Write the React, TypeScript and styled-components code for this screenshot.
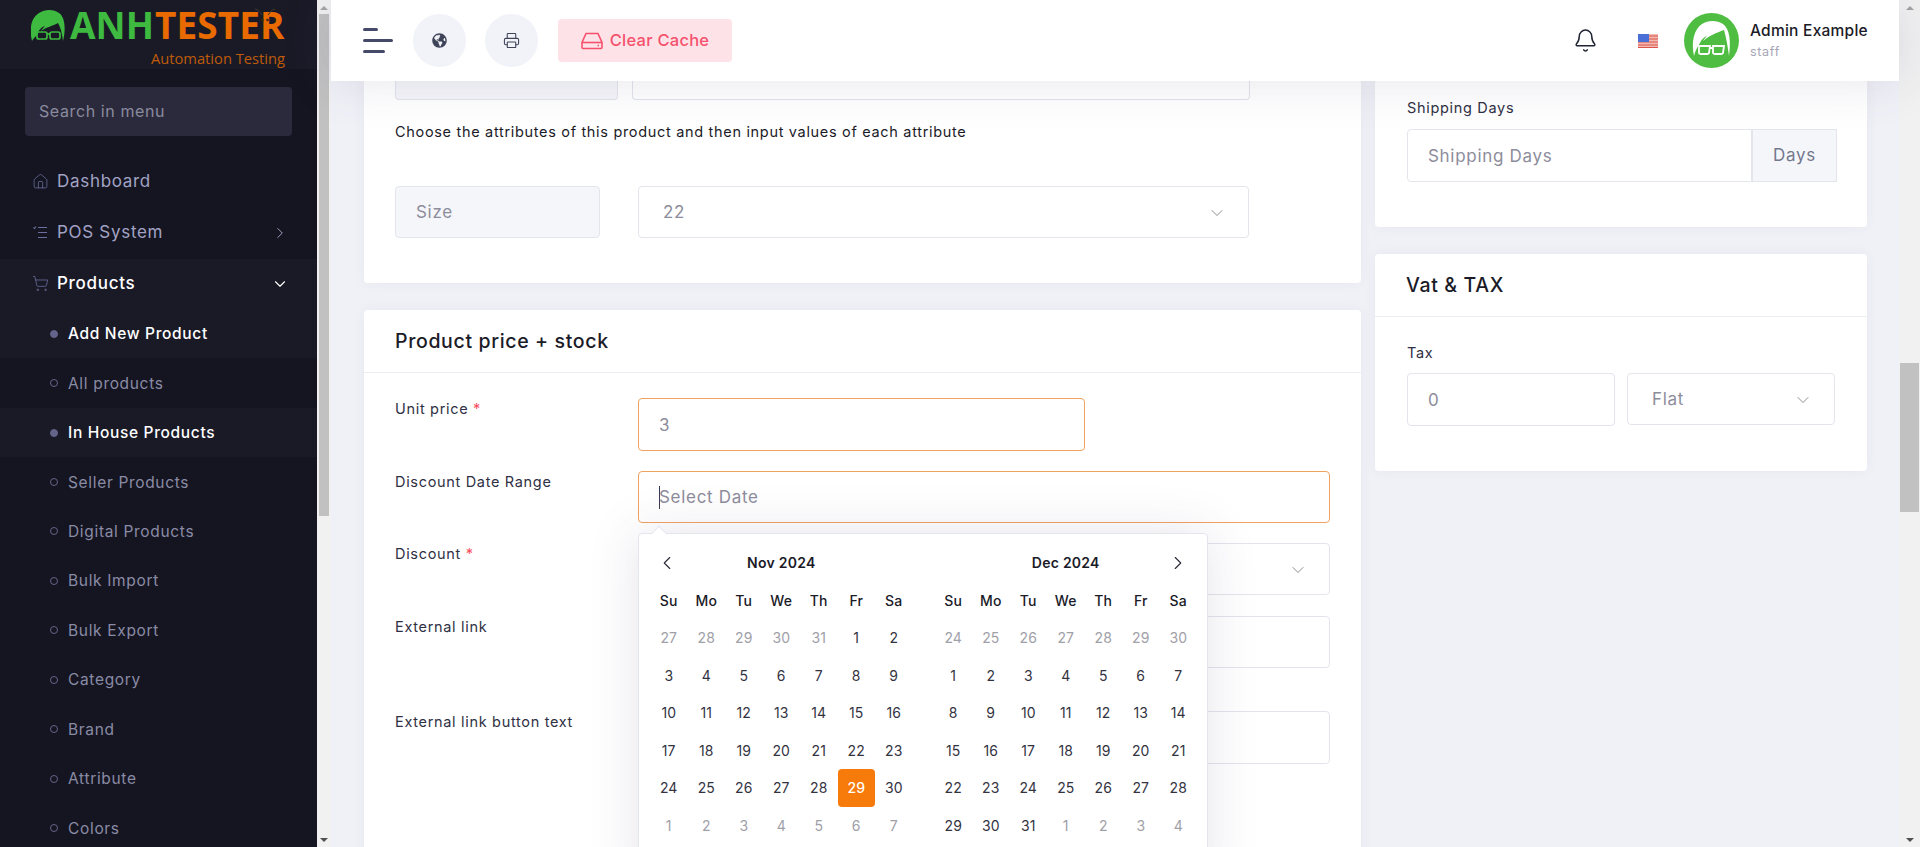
import React from "react";
import styled, { createGlobalStyle } from "styled-components";
import { ChevronDown, ChevronLeft, ChevronRight, Printer, Bell, Home, ShoppingCart } from "lucide-react";
import { FaGlobeAmericas } from "react-icons/fa";

const Global = createGlobalStyle`
  html, body { margin: 0; padding: 0; height: 100%; overflow: hidden; background: #f0f1f7; }
  * { box-sizing: border-box; }
  body { font-family: Inter, "Open Sans", "Liberation Sans", sans-serif; font-size: 14.5px; line-height: 21px; color: #1b1b28; letter-spacing: .68px; }
`;

const Shell = styled.div`display: flex; width: 1920px; height: 847px; overflow: hidden;`;
const Sidebar = styled.aside`width: 317px; flex: none; background: #151521; display: flex; flex-direction: column; overflow: hidden;`;
const Brand = styled.div`height: 69px; flex: none; background: #1a1a27; padding: 6px 0 0 31px; display: flex; flex-direction: column;`;
const BrandTop = styled.div`display: flex; align-items: flex-start; position: relative; height: 38px; font-family: "Open Sans", sans-serif; font-weight: 700; font-size: 37px; line-height: 38px; letter-spacing: .05px;`;
const BrandHead = styled.svg`width: 34px; height: 34px; margin: 3px 5px 0 0; flex: none;`;
const Anh = styled.span`color: #3dba3f;`;
const Tester = styled.span`color: #e86a00; margin-left: 1px;`;
const Bug = styled.svg`position: absolute; left: 222px; top: 1px; width: 24px; height: 24px;`;
const Tagline = styled.div`margin: 4px 0 0 120px; font-family: "Open Sans", sans-serif; font-size: 14.7px; line-height: 20px; color: #bf5a0a; letter-spacing: 0;`;
const SearchBox = styled.div`margin: 18px 25px 19.5px; height: 49px; flex: none; background: #2a2a3c; border-radius: 4px; padding: 0 14px; display: flex; align-items: center; font-size: 16px; color: #8b8b9e; letter-spacing: .6px;`;
const MenuRow = styled.div<{ $active?: boolean; $h?: number }>`height: ${p => p.$h ?? 51.5}px; flex: none; display: flex; align-items: center; padding: 0 28px 0 32px; gap: 8px; font-size: 17px; letter-spacing: .7px; background: ${p => p.$active ? "#1a1a27" : "transparent"}; color: ${p => p.$active ? "#fff" : "#a2a3c4"}; font-weight: ${p => p.$active ? 500 : 400};`;
const MenuLabel = styled.span`flex: 1;`;
const MenuIcon = styled.span`width: 17px; height: 17px; display: flex; color: #6b6f9e; flex: none;`;
const SubRow = styled.div<{ $active?: boolean }>`height: 49.45px; flex: none; display: flex; align-items: center; padding-left: 50px; gap: 10px; font-size: 15.5px; letter-spacing: .67px; background: ${p => p.$active ? "#1a1a27" : "#151521"}; color: ${p => p.$active ? "#fff" : "#8a8ba5"}; font-weight: ${p => p.$active ? 500 : 400};`;
const Bullet = styled.span<{ $active?: boolean }>`width: 8px; height: 8px; border-radius: 50%; flex: none; border: 1px solid #64648a; background: ${p => p.$active ? "#64648a" : "transparent"};`;

const Track = styled.div<{ $w: number }>`width: ${p => p.$w}px; flex: none; background: #f1f1f1; display: flex; flex-direction: column; align-items: center; position: relative;`;
const ArrowUp = styled.span`margin-top: 6px; width: 0; height: 0; border-left: 4px solid transparent; border-right: 4px solid transparent; border-bottom: 4px solid #a3a3a3; flex: none;`;
const ArrowDown = styled.span`margin-top: auto; margin-bottom: 5px; width: 0; height: 0; border-left: 4px solid transparent; border-right: 4px solid transparent; border-top: 4px solid #505050; flex: none;`;
const Thumb = styled.div<{ $top: number; $h: number; $w: number }>`margin-top: ${p => p.$top}px; height: ${p => p.$h}px; width: ${p => p.$w}px; background: #c1c1c1; flex: none;`;

const Main = styled.main`flex: 1; min-width: 0; display: flex; flex-direction: column; height: 847px; background: #f0f1f7;`;
const Topbar = styled.header`height: 81px; flex: none; background: #fff; display: flex; align-items: center; padding: 0 0 0 32px; position: relative; z-index: 5; box-shadow: 0 0 50px 0 rgba(82,63,105,.15);`;
const Burger = styled.div`width: 30px; display: flex; flex-direction: column; gap: 8px; margin-right: 20px;`;
const BurgerLine = styled.span<{ $w: number }>`height: 3px; width: ${p => p.$w}px; background: #454a68; border-radius: 2px;`;
const RoundBtn = styled.div<{ $mr: number }>`width: 53px; height: 53px; border-radius: 50%; background: #f2f3f8; display: flex; align-items: center; justify-content: center; margin-right: ${p => p.$mr}px; color: #3f4458;`;
const CacheBtn = styled.div`width: 174px; height: 43px; border-radius: 4px; background: #fde3e8; color: #f5516d; display: flex; align-items: center; justify-content: center; gap: 7px; font-size: 16.5px; font-weight: 500; letter-spacing: .25px;`;
const TopRight = styled.div`margin-left: auto; display: flex; align-items: center; padding-right: 0;`;
const BellWrap = styled.div`display: flex; color: #1f2433; margin-right: 40px;`;
const FlagIcon = styled.svg`width: 20px; height: 14px; margin-right: 26px;`;
const Avatar = styled.svg`width: 55px; height: 55px; margin-right: 11px;`;
const UserText = styled.div`width: 149px; display: flex; flex-direction: column;`;
const UserName = styled.div`font-size: 15.5px; font-weight: 500; line-height: 21px; color: #1b1b28; letter-spacing: .25px;`;
const UserRole = styled.div`font-size: 12.5px; line-height: 18px; margin-top: 2px; color: #a5a6b5;`;

const Content = styled.div`flex: 1; min-height: 0; overflow: hidden; display: grid; grid-template-columns: 997px 492px; column-gap: 14px; padding-left: 33px; align-items: start;`;
const Column = styled.div`display: flex; flex-direction: column;`;
const Card = styled.section<{ $gap?: number }>`background: #fff; border-radius: 4px; margin-bottom: ${p => p.$gap ?? 0}px; box-shadow: 0 0 13px 0 rgba(82,63,105,.05); display: flex; flex-direction: column;`;
const CutCard = styled(Card)`border-radius: 0 0 4px 4px;`;
const CardHead = styled.div<{ $h: number }>`height: ${p => p.$h}px; flex: none; padding: 0 31px; display: flex; align-items: center; border-bottom: 1px solid #ebedf3; font-size: 19.5px; font-weight: 500; color: #1b1b28; letter-spacing: .65px;`;
const CardBody = styled.div<{ $pad: string }>`padding: ${p => p.$pad};`;
const StubRow = styled.div`display: flex; gap: 14px; height: 19px;`;
const Stub = styled.div<{ $w: number; $fill?: boolean }>`width: ${p => p.$w}px; border: 1px solid #e2e5ec; border-top: 0; border-radius: 0 0 4px 4px; background: ${p => p.$fill ? "#f5f6fa" : "#fff"};`;
const Hint = styled.p<{ $mt: number; $mb: number }>`margin: ${p => p.$mt}px 0 ${p => p.$mb}px; color: #1b1b28;`;
const AttrRow = styled.div`display: flex; gap: 38px;`;

const Field = styled.div<{ $w: number; $h: number; $fill?: boolean; $focus?: boolean; $pad?: number; $radius?: string; $select?: boolean }>`
  width: ${p => p.$w}px; height: ${p => p.$h}px; flex: none;
  border: 1px solid ${p => p.$focus ? "#f0a35e" : "#e2e5ec"};
  border-radius: ${p => p.$radius ?? "4px"};
  background: ${p => p.$fill ? "#f5f6fa" : "#fff"};
  padding: 1px ${p => (p.$pad ?? 20) - (p.$select ? 3 : 0)}px 0 ${p => p.$pad ?? 20}px;
  display: flex; align-items: center; justify-content: space-between;
  font-size: 17px; color: #8d8d9b; letter-spacing: .7px; position: relative;
`;
const FormRow = styled.div<{ $mb: number }>`display: flex; margin-bottom: ${p => p.$mb}px;`;
const FormLabel = styled.div`width: 243px; flex: none; color: #2f3044;`;
const Req = styled.span`color: #f64e60;`;
const Caret = styled.span`width: 1px; height: 23px; background: #3a3a50; flex: none; margin-right: -1px;`;
const PlainLabel = styled.div<{ $mt: number; $mb: number }>`margin: ${p => p.$mt}px 0 ${p => p.$mb}px 32px; color: #2f3044;`;
const InputGroup = styled.div`display: flex; margin-left: 32px;`;
const AddOn = styled.div`width: 85px; height: 53px; background: #f5f6fa; border: 1px solid #e2e5ec; display: flex; align-items: center; justify-content: center; font-size: 17px; color: #74788d; letter-spacing: .7px;`;
const TaxRow = styled.div`display: flex; gap: 12px; padding: 0 32px; align-items: flex-start;`;
const DateText = styled.span`flex: 1; display: flex; align-items: center;`;

const Picker = styled.div`position: absolute; left: -1px; top: 61px; width: 570px; height: 360px; background: #fff; border: 1px solid #e4e6ef; border-radius: 4px; box-shadow: 0 0 50px 0 rgba(82,63,105,.15); padding: 10px 11px 0 11px; display: flex; gap: 22px; z-index: 3; &::before { content: ""; position: absolute; left: 14px; top: -6px; width: 11px; height: 11px; background: #fff; border-left: 1px solid #e4e6ef; border-top: 1px solid #e4e6ef; transform: rotate(45deg); }`;
const Month = styled.div`display: grid; grid-template-columns: repeat(7, 37.5px); grid-auto-rows: 37.5px; width: 262.5px; flex: none;`;
const MonthHead = styled.div`grid-column: 1 / -1; display: grid; grid-template-columns: 37.5px 1fr 37.5px; align-items: center; justify-items: center; font-size: 14px; font-weight: 600; color: #1b1b28; letter-spacing: .25px;`;
const NavBtn = styled.span<{ $shift?: number }>`display: flex; color: #2a2a38; margin-left: ${p => p.$shift ?? 0}px;`;
const Dow = styled.div`display: flex; align-items: center; justify-content: center; font-size: 14px; font-weight: 500; color: #1b1b28; letter-spacing: .2px;`;
const Day = styled.div<{ $muted?: boolean; $sel?: boolean }>`display: flex; align-items: center; justify-content: center; font-size: 14px; letter-spacing: .1px; border-radius: 4px; color: ${p => p.$sel ? "#fff" : p.$muted ? "#a0a0a8" : "#33333f"}; background: ${p => p.$sel ? "#f77b0b" : "transparent"}; font-weight: ${p => p.$sel ? 500 : 400};`;

const subs: [string, boolean][] = [["Add New Product", true], ["All products", false], ["In House Products", true], ["Seller Products", false], ["Digital Products", false], ["Bulk Import", false], ["Bulk Export", false], ["Category", false], ["Brand", false], ["Attribute", false], ["Colors", false]];
const dows = ["Su", "Mo", "Tu", "We", "Th", "Fr", "Sa"];
type D = [number, boolean];
const range = (a: number, b: number, m: boolean): D[] => Array.from({ length: b - a + 1 }, (_, i) => [a + i, m] as D);
const nov: D[] = [...range(27, 31, true), ...range(1, 30, false), ...range(1, 7, true)];
const dec: D[] = [...range(24, 30, true), ...range(1, 31, false), ...range(1, 4, true)];

function CalMonth({ title, days, left, right, sel }: { title: string; days: D[]; left?: boolean; right?: boolean; sel?: number }) {
  return (
    <Month>
      <MonthHead>
        <NavBtn $shift={-4}>{left && <ChevronLeft size={22} strokeWidth={1.2} />}</NavBtn>
        <span>{title}</span>
        <NavBtn>{right && <ChevronRight size={22} strokeWidth={1.2} />}</NavBtn>
      </MonthHead>
      {dows.map(d => <Dow key={d}>{d}</Dow>)}
      {days.map(([n, m], i) => <Day key={i} $muted={m} $sel={!m && n === sel}>{n}</Day>)}
    </Month>
  );
}

export default function App() {
  return (
    <>
      <Global />
      <Shell>
        <Sidebar>
          <Brand>
            <BrandTop>
              <BrandHead viewBox="0 0 34 34">
                <path d="M1 32C-2 20 0 9 8 4c6-4 15-4 20 0 6 4 7 16 4 28-1-7-2-13-5-18-5 3-12 4-17 8 1-2 3-4 4-5-4 1-7 5-8 9-2 2-4 4-5 6z" fill="#3dba3f" />
                <g fill="none" stroke="#3dba3f" strokeWidth="1.7"><rect x="6" y="23" width="10" height="7" rx="2" /><rect x="19" y="23" width="10" height="7" rx="2" /><path d="M16 25h3" /></g>
              </BrandHead>
              <Anh>ANH</Anh><Tester>TESTER</Tester>
              <Bug viewBox="0 0 24 24"><g fill="none" stroke="#3a3a30" strokeWidth="1"><path d="M9 8L5 3 2 2M15 8l4-5 3-1" /></g><circle cx="9.5" cy="13" r="1.3" fill="#3a2a10" /><circle cx="14.5" cy="13" r="1.3" fill="#3a2a10" /></Bug>
            </BrandTop>
            <Tagline>Automation Testing</Tagline>
          </Brand>
          <SearchBox>Search in menu</SearchBox>
          <MenuRow><MenuIcon><Home size={17} strokeWidth={1.1} /></MenuIcon><MenuLabel>Dashboard</MenuLabel></MenuRow>
          <MenuRow>
            <MenuIcon><svg viewBox="0 0 17 17" width="17" height="17" fill="none" stroke="currentColor" strokeWidth="1.1"><path d="M1.5 3.5l1 1 1.5-2M6 3.5h9M6 8.5h9M6 13.5h9" /></svg></MenuIcon>
            <MenuLabel>POS System</MenuLabel><ChevronRight size={18} strokeWidth={1.3} color="#a2a3c4" />
          </MenuRow>
          <MenuRow $active $h={50.5}>
            <MenuIcon><ShoppingCart size={17} strokeWidth={1.1} /></MenuIcon>
            <MenuLabel>Products</MenuLabel><ChevronDown size={18} strokeWidth={1.5} color="#fff" />
          </MenuRow>
          {subs.map(([t, a]) => <SubRow key={t} $active={a}><Bullet $active={a} />{t}</SubRow>)}
        </Sidebar>
        <Track $w={14}>
          <ArrowUp />
          <Thumb $w={10} $top={4} $h={502} />
          <ArrowDown />
        </Track>
        <Main>
          <Topbar>
            <Burger><BurgerLine $w={15} /><BurgerLine $w={30} /><BurgerLine $w={22} /></Burger>
            <RoundBtn $mr={19}><FaGlobeAmericas size={15} /></RoundBtn>
            <RoundBtn $mr={20}><Printer size={17} strokeWidth={1.5} /></RoundBtn>
            <CacheBtn>
              <svg width="22" height="18" viewBox="0 0 22 18" fill="none" stroke="currentColor" strokeWidth="1.6"><path d="M5 1.5h12l4 9v5a1 1 0 0 1-1 1H2a1 1 0 0 1-1-1v-5z" /><path d="M1 10.5h20" /><path d="M16.5 13.5h1.5" /></svg>
              Clear Cache
            </CacheBtn>
            <TopRight>
              <BellWrap><Bell size={25} strokeWidth={1.4} /></BellWrap>
              <FlagIcon viewBox="0 0 20 14">
                <rect width="20" height="14" fill="#f3b9b2" /><path d="M0 2h20M0 5h20M0 8h20M0 11h20M0 13.5h20" stroke="#d9574a" strokeWidth="1.2" /><rect width="11" height="8" fill="#4a6fd6" />
              </FlagIcon>
              <Avatar viewBox="0 0 55 55">
                <circle cx="27.5" cy="27.5" r="27.5" fill="#4fbd42" />
                <path d="M10 43c-3-14 0-27 8-32 6-4 15-4 21 0 7 5 8 18 6 32-1-9-3-19-5-26-8 3-14 5-21 11 1-2 3-4 4-5-3 1-6 4-7 7-2 3-5 8-6 13z" fill="#fff" />
                <g fill="none" stroke="#fff" strokeWidth="1.8"><path d="M15 33h11l-1 7a2 2 0 0 1-2 1h-6a2 2 0 0 1-2-1zM29 33h11l-1 7a2 2 0 0 1-2 1h-6a2 2 0 0 1-2-1zM26 35h3" /></g>
              </Avatar>
              <UserText><UserName>Admin Example</UserName><UserRole>staff</UserRole></UserText>
            </TopRight>
          </Topbar>
          <Content>
            <Column>
              <CutCard $gap={27}>
                <CardBody $pad="0 31px 45px">
                  <StubRow><Stub $w={223} $fill /><Stub $w={618} /></StubRow>
                  <Hint $mt={21} $mb={44}>Choose the attributes of this product and then input values of each attribute</Hint>
                  <AttrRow>
                    <Field $w={205} $h={52} $fill>Size</Field>
                    <Field $w={611} $h={52} $pad={24} $select>22<ChevronDown size={20} strokeWidth={1} color="#777" /></Field>
                  </AttrRow>
                </CardBody>
              </CutCard>
              <Card>
                <CardHead $h={63}>Product price + stock</CardHead>
                <CardBody $pad="25px 31px 200px">
                  <FormRow $mb={20}><FormLabel>Unit price <Req>*</Req></FormLabel><Field $w={447} $h={53} $focus>3</Field></FormRow>
                  <FormRow $mb={20}>
                    <FormLabel>Discount Date Range</FormLabel>
                    <Field $w={692} $h={52} $focus>
                      <DateText><Caret />Select Date</DateText>
                      <Picker>
                        <CalMonth title="Nov 2024" days={nov} left sel={29} />
                        <CalMonth title="Dec 2024" days={dec} right />
                      </Picker>
                    </Field>
                  </FormRow>
                  <FormRow $mb={21}><FormLabel>Discount <Req>*</Req></FormLabel><Field $w={692} $h={52} $pad={24} $select><span />&nbsp;<ChevronDown size={20} strokeWidth={1} color="#777" /></Field></FormRow>
                  <FormRow $mb={43}><FormLabel>External link</FormLabel><Field $w={692} $h={52} /></FormRow>
                  <FormRow $mb={0}><FormLabel>External link button text</FormLabel><Field $w={692} $h={53} /></FormRow>
                </CardBody>
              </Card>
            </Column>
            <Column>
              <CutCard $gap={27}>
                <PlainLabel $mt={16} $mb={11}>Shipping Days</PlainLabel>
                <InputGroup>
                  <Field $w={345} $h={53} $radius="4px 0 0 4px">Shipping Days</Field>
                  <AddOn>Days</AddOn>
                </InputGroup>
                <CardBody $pad="0 0 45px" />
              </CutCard>
              <Card>
                <CardHead $h={63}>Vat &amp; TAX</CardHead>
                <PlainLabel $mt={25} $mb={10}>Tax</PlainLabel>
                <TaxRow>
                  <Field $w={208} $h={53}>0</Field>
                  <Field $w={208} $h={52} $pad={24} $select>Flat<ChevronDown size={20} strokeWidth={1} color="#777" /></Field>
                </TaxRow>
                <CardBody $pad="0 0 45px" />
              </Card>
            </Column>
          </Content>
        </Main>
        <Track $w={21}>
          <ArrowUp />
          <Thumb $w={19} $top={353} $h={149} />
          <ArrowDown />
        </Track>
      </Shell>
    </>
  );
}
